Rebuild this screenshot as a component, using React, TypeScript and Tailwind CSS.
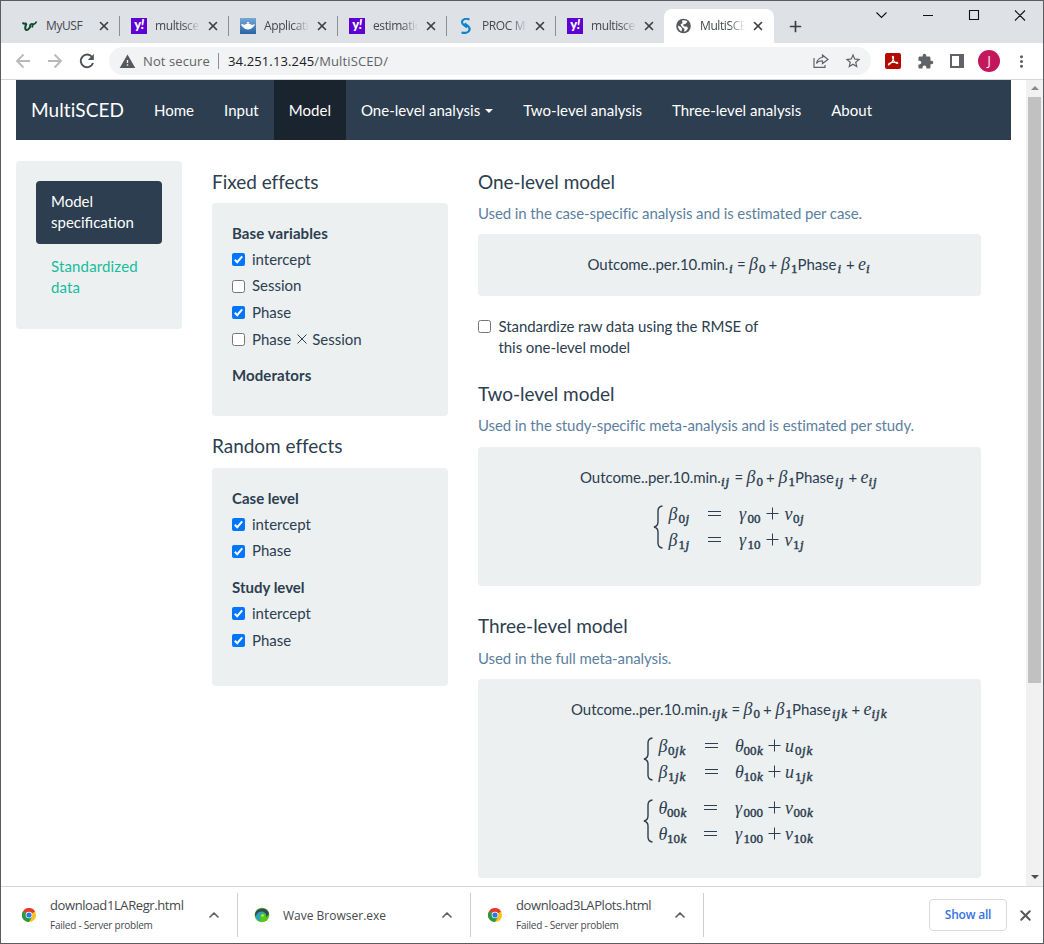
import React from "react";
import { ChevronUp, Plus, X } from "lucide-react";
import { MdExtension, MdMoreVert, MdPublic, MdStarBorder, MdWarning } from "react-icons/md";

const ui = "font-['Open_Sans','Noto_Sans',sans-serif]";

function Yahoo() {
  return (
    <div className="flex h-4 w-4 items-center justify-center bg-[#5f01d1] font-['Lato',sans-serif] text-[13px] leading-none font-black text-white">
      <span className="-mt-[3px] tracking-[-0.5px]">y<i>!</i></span>
    </div>
  );
}

function Bull() {
  return (
    <svg width="16" height="16" viewBox="0 0 16 16" fill="none" stroke="#12482f">
      <path d="M.5 4.500Q2 6.500 4.500 5.200" strokeWidth="2" />
      <path d="M4.500 5.500Q3 8.500 3.200 10.500 4 13 6 11.500 8.500 9.500 8.500 6.500" strokeWidth="2" />
      <path d="M8 7Q10 5 11 6.500 13.500 6 14.500 3.500M11 6.500L10 9.500" strokeWidth="1.800" />
    </svg>
  );
}

function Ship() {
  return (
    <svg width="16" height="16" viewBox="0 0 16 16">
      <defs>
        <linearGradient id="sea" x1="0" y1="0" x2="0" y2="1">
          <stop offset="0" stopColor="#76a9d6" />
          <stop offset="1" stopColor="#2863a5" />
        </linearGradient>
      </defs>
      <rect width="16" height="16" fill="url(#sea)" />
      <path d="M1 6.500 Q2.500 5.500 4 7 L6 6 Q8 4.500 10 6 L12 7 L15 6 Q14.500 8 12.500 9.500 Q11 11.500 8 11.500 Q4.500 11.500 3.500 9.500 Q2 8.500 1 6.500Z" fill="#fff" />
      <path d="M7 4.500h2" stroke="#fff" />
    </svg>
  );
}

function Sas() {
  return (
    <svg width="16" height="16" viewBox="0 0 16 16" fill="none" stroke="#0a84cc">
      <path d="M11.500 1.500 Q7 -.3 4.500 2.500 Q3 5 6 7.200 L9 9.500" strokeWidth="2" />
      <path d="M6.500 5.500 L10 8 Q13 11 10.500 13.500 Q8 15.800 3.500 14.500" strokeWidth="2.200" />
    </svg>
  );
}

const tabs = [
  { title: "MyUSF", icon: <Bull />, fade: false },
  { title: "multisce", icon: <Yahoo />, fade: true },
  { title: "Applicati", icon: <Ship />, fade: true },
  { title: "estimatic", icon: <Yahoo />, fade: true },
  { title: "PROC M", icon: <Sas />, fade: true },
  { title: "multisce", icon: <Yahoo />, fade: true },
];

function Tab({ title, icon, fade, active }: { title: string; icon: React.ReactNode; fade: boolean; active?: boolean }) {
  return (
    <div className={active ? "flex h-[34px] w-[110px] items-center rounded-t-lg bg-white pl-3" : "flex h-[34px] w-[109px] items-center pl-[11px]"}>
      <div className="w-4 shrink-0">{icon}</div>
      <div className={`ml-[7px] w-[46px] shrink-0 pl-px text-[12px] leading-4 tracking-[-0.4px] whitespace-nowrap text-[#45494d] ${fade ? "[mask-image:linear-gradient(to_right,#000_65%,transparent_100%)]" : ""}`}>{title}</div>
      <X className="ml-[6px] shrink-0 text-[#3c4043]" size={14} strokeWidth={2.800} />
      {!active && <div className="ml-auto h-5 w-px bg-[#8b8e93]" />}
    </div>
  );
}

function Browser() {
  return (
    <>
      <div className={`flex h-[42px] shrink-0 items-end bg-[#dee1e6] pl-[10px] ${ui}`}>
        {tabs.map((t, i) => <Tab key={i} {...t} />)}
        <div className="-ml-[1px]">
          <Tab
            title="MultiSCE"
            icon={
              <svg width="16" height="16" viewBox="0 0 16 16">
                <circle cx="7.500" cy="8" r="7.300" fill="#55595d" />
                <path d="M2 7.500Q5 8.500 6 10.500L5.500 13.500Q2 11.500 2 7.500zM6 2.500Q9 1.500 11.500 3.500L9.500 6 7 6.500 8 8.500 11 8.500 12 10.500Q10.500 13.500 8 13.800L8.500 11 6 9 4.500 6.500 6.500 5z" fill="#fff" />
              </svg>
            }
            fade
            active
          />
        </div>
        <div className="flex h-[34px] w-[43px] items-center justify-center text-[#3c4043]"><Plus size={17} strokeWidth={2.400} /></div>
        <div className="mt-[6px] ml-auto flex w-[171px] items-start self-start pr-[13px]">
          <svg width="158" height="18" viewBox="0 0 158 18" fill="none" stroke="#111" strokeWidth="1.100">
            <path d="M4.500 5.500l5 5 5-5M51 8.500h10M97.500 3.500h9v9h-9zM143 3.500l10 10M153 3.500l-10 10" />
          </svg>
        </div>
      </div>
      <div className={`flex h-[37px] shrink-0 items-center border-b border-[#d5d7da] bg-white ${ui}`}>
        <svg className="ml-[14px]" width="86" height="20" viewBox="0 0 86 20" fill="none" strokeWidth="1.800">
          <path d="M15 10H2M8.500 3.500L2 10l6.500 6.500M33 10h13M39.500 3.500L46 10l-6.500 6.500" stroke="#b7b9bc" />
          <path d="M77 6A6.300 6.300 0 1 0 78 12" stroke="#4f5357" strokeWidth="2" />
          <path d="M78.800 3v6h-6z" fill="#4f5357" />
        </svg>
        <div className="ml-[8px] flex h-[28px] w-[762px] items-center rounded-full bg-[#f1f3f4] pl-[10px] text-[13px] text-[#5f6368]">
          <MdWarning size={17} color="#55595d" />
          <span className="ml-[7px] w-[67px] pt-px tracking-[0.1px] whitespace-nowrap">Not secure</span>
          <span className="mx-[8px] h-4 w-px bg-[#8b8e93]" />
          <span className="ml-px pt-px tracking-[0.13px] whitespace-nowrap"><span className="text-[#202124]">34.251.13.245</span>/MultiSCED/</span>
          <svg className="mr-[15px] ml-auto" width="16" height="16" viewBox="0 0 16 16" fill="none" stroke="#5f6368" strokeWidth="1.200">
            <path d="M1 5v9.400h11V12M9.500 2l5.500 4.500-5.500 4V8Q5.500 7.500 3.500 10.500 4.500 5 9.500 4.500z" />
          </svg>
          <MdStarBorder className="mr-[9px]" size={18} />
        </div>
        <div className="ml-[14px] flex h-4 w-4 items-center justify-center rounded-[2px] bg-[#b30b00]">
          <svg width="12" height="12" viewBox="0 0 12 12" fill="none" stroke="#fff" strokeWidth="1.200"><path d="M5.500 1.500Q6.500 1 6.500 3 6 7 1.800 9.800 1 10.500 2 8.500 6 6.500 10 7.300 11.500 8.300 10 8.500 6 7 5.500 1.500z" /></svg>
        </div>
        <MdExtension className="ml-[16px]" size={17} color="#5f6368" />
        <div className="ml-[16px] h-[14px] w-[14px] border-2 border-r-[5px] border-[#5f6368]" />
        <div className="ml-[14px] flex h-[22px] w-[22px] items-center justify-center rounded-full bg-[#c2185b] text-[12px] text-white">J</div>
        <MdMoreVert className="ml-[12px]" size={19} color="#5f6368" />
      </div>
    </>
  );
}

function Check({ label, checked }: { label: React.ReactNode; checked?: boolean }) {
  return (
    <div className="flex h-[26.700px] items-center">
      <Box checked={checked} />
      <span className="ml-[7px]">{label}</span>
    </div>
  );
}

function Box({ checked }: { checked?: boolean }) {
  return checked ? (
    <svg className="shrink-0" width="13" height="13" viewBox="0 0 13 13">
      <rect width="13" height="13" rx="2" fill="#0075ff" />
      <path d="M2.800 6.800L5.200 9.200 10.200 3.300" fill="none" stroke="#fff" strokeWidth="2" />
    </svg>
  ) : (
    <div className="h-[13px] w-[13px] shrink-0 rounded-[2.500px] border border-[#767676] bg-white" />
  );
}

type Token = [kind: "t" | "v" | "s" | "o" | "gap", text: string, width: number];

function Tok({ token: [kind, text, width] }: { token: Token }) {
  if (kind === "gap") return <span className="shrink-0" style={{ width }} />;
  if (kind === "t") return <span className="shrink-0 tracking-[-0.06px] whitespace-nowrap" style={{ width }}>{text}</span>;
  if (kind === "v") return <span className="shrink-0 font-['Liberation_Serif',serif] text-[18px] leading-none italic" style={{ width }}>{text}</span>;
  if (kind === "o") {
    return (
      <svg className="mt-[2px] h-[13px] shrink-0 self-start" width={width} height="13" viewBox="0 0 13 13" stroke="#2c3e50" strokeWidth="1">
        <path d={text === "=" ? "M0 4.500h13M0 8.500h13" : "M.5 6.500h12M6.500 .5v12"} />
      </svg>
    );
  }
  return (
    <span className="shrink-0 translate-y-[3px] font-['Liberation_Serif',serif] text-[13px] leading-none whitespace-nowrap [-webkit-text-stroke:0.45px_#2c3e50]" style={{ width }}>
      {text.split("").map((c, i) => <span key={i} className={/\d/.test(c) ? "" : "mr-[0.700px] ml-[0.400px] italic"}>{c}</span>)}
    </span>
  );
}

function Line({ tokens, className = "" }: { tokens: Token[]; className?: string }) {
  return <div className={`flex items-baseline ${className}`}>{tokens.map((t, i) => <Tok key={i} token={t} />)}</div>;
}

function System({ rows, className }: { rows: Token[][]; className: string }) {
  return (
    <div className={`flex h-[52px] ${className}`}>
      <svg className="mt-[4px] shrink-0" width="10" height="44" viewBox="0 0 10 44" fill="none" stroke="#2c3e50" strokeWidth="1.400">
        <path d="M9.500 1Q5 1.500 5 6v11Q5 21 1 22 5 23 5 27v11Q5 42.500 9.500 43" />
      </svg>
      <div className="ml-[5.500px]">
        {rows.map((r, i) => <Line key={i} tokens={r} className="h-[26px] pt-[4px]" />)}
      </div>
    </div>
  );
}

const one: Token[] = [["t", "Outcome..per.10.min.", 141], ["s", "i", 8.5], ["t", "=", 12], ["v", "β", 10], ["s", "0", 9.5], ["t", "+", 12.500], ["v", "β", 10], ["s", "1", 6.5], ["t", "Phase", 39.5], ["s", "i", 9], ["t", "+", 12], ["v", "e", 7.5], ["s", "i", 5]];
const two: Token[] = [["t", "Outcome..per.10.min.", 140.5], ["s", "ij", 14], ["t", "=", 12], ["v", "β", 10], ["s", "0", 9.5], ["t", "+", 12.500], ["v", "β", 10], ["s", "1", 6.5], ["t", "Phase", 39.5], ["s", "ij", 14], ["t", "+", 12], ["v", "e", 7.5], ["s", "ij", 11]];
const three: Token[] = [["t", "Outcome..per.10.min.", 140.5], ["s", "ijk", 20], ["t", "=", 12], ["v", "β", 10], ["s", "0", 9.5], ["t", "+", 12.500], ["v", "β", 10], ["s", "1", 6.5], ["t", "Phase", 39.5], ["s", "ijk", 20], ["t", "+", 12], ["v", "e", 7.5], ["s", "ijk", 17]];

const twoRow = (n: string): Token[] => [["v", "β", 10], ["s", n + "j", 29.5], ["o", "=", 13], ["gap", "", 18], ["v", "γ", 8.5], ["s", n + "0", 18], ["o", "+", 13], ["gap", "", 6], ["v", "v", 8.5], ["s", n + "j", 13]];
const threeRow = (n: string): Token[] => [["v", "β", 9.5], ["s", n + "jk", 37], ["o", "=", 13], ["gap", "", 17], ["v", "θ", 8.5], ["s", n + "0k", 24], ["o", "+", 13], ["gap", "", 4.5], ["v", "u", 10], ["s", n + "jk", 19]];
const studyRow = (n: string): Token[] => [["v", "θ", 8.5], ["s", n + "0k", 37], ["o", "=", 13], ["gap", "", 18], ["v", "γ", 8.5], ["s", n + "00", 24.5], ["o", "+", 13], ["gap", "", 4], ["v", "v", 8.5], ["s", n + "0k", 19]];

function Heading({ children }: { children: React.ReactNode }) {
  return <h4 className="h-[21px] text-[19px] leading-[19px] tracking-[-0.030px]">{children}</h4>;
}

function Content() {
  const nav = "flex h-[60px] items-center px-[15px] pt-[2px] tracking-[0.020px]";
  const note = "h-[21px] tracking-[-0.1px] text-[#5d7f9f]";
  return (
    <main className="flex min-h-0 grow overflow-hidden font-['Lato',sans-serif] text-[15px] leading-[21.430px] text-[#2c3e50]">
      <div className="ml-[15px] w-[995px] shrink-0">
        <nav className="flex h-[60px] items-center bg-[#2c3e50] text-white">
          <div className="w-[123px] pl-[15px] text-[19px] tracking-[0.1px]">MultiSCED</div>
          <a className={nav}>Home</a>
          <a className={nav}>Input</a>
          <a className={`${nav} bg-[#1a242f]`}>Model</a>
          <a className={nav}>One-level analysis<span className="ml-[5px] border-x-4 border-t-4 border-x-transparent border-t-white" /></a>
          <a className={nav}>Two-level analysis</a>
          <a className={nav}>Three-level analysis</a>
          <a className={nav}>About</a>
        </nav>
        <div className="mt-[21px] flex items-start">
          <aside className="h-[168px] w-[166px] rounded bg-[#ecf0f1] p-5">
            <div className="h-[63px] rounded bg-[#2c3e50] px-[15px] py-[10px] text-white">Model specification</div>
            <div className="mt-[2px] h-[63px] px-[15px] py-[10px] tracking-[0.150px] text-[#18bc9c]">Standardized data</div>
          </aside>
          <section className="mt-[11px] ml-[30px] w-[236px]">
            <Heading>Fixed effects</Heading>
            <div className="mt-[10px] h-[213px] rounded bg-[#ecf0f1] px-5 pt-5">
              <div className="h-[23px] leading-[21px] font-bold tracking-[0.100px]">Base variables</div>
              <Check label="intercept" checked />
              <Check label="Session" />
              <Check label="Phase" checked />
              <Check label={<span className="flex items-center">Phase<svg className="mx-[5.500px]" width="10" height="10" viewBox="0 0 10 10" stroke="#2c3e50"><path d="M.5.5l9 9M9.500.5l-9 9" /></svg>Session</span>} />
              <div className="mt-[12px] font-bold tracking-[0.100px]">Moderators</div>
            </div>
            <div className="mt-[20px]"><Heading>Random effects</Heading></div>
            <div className="mt-[11px] h-[218px] rounded bg-[#ecf0f1] px-5 pt-5">
              <div className="h-[23px] leading-[21px] font-bold">Case level</div>
              <Check label="intercept" checked />
              <Check label="Phase" checked />
              <div className="mt-[13px] h-[23px] leading-[21px] font-bold">Study level</div>
              <Check label="intercept" checked />
              <Check label="Phase" checked />
            </div>
          </section>
          <section className="mt-[11px] ml-[30px] w-[503px]">
            <Heading>One-level model</Heading>
            <p className={`mt-[10px] ${note}`}>Used in the case-specific analysis and is estimated per case.</p>
            <div className="mt-[10px] h-[62px] rounded bg-[#ecf0f1] pt-5 pl-[109.500px]"><Line tokens={one} /></div>
            <div className="mt-[20px] flex h-[43px]">
              <div className="mt-[4px]"><Box /></div>
              <div className="ml-[7.500px] w-[270px] tracking-[-0.070px]">Standardize raw data using the RMSE of this one-level model</div>
            </div>
            <div className="mt-[25px]"><Heading>Two-level model</Heading></div>
            <p className={`mt-[10px] ${note}`}>Used in the study-specific meta-analysis and is estimated per study.</p>
            <div className="mt-[11px] h-[139px] rounded bg-[#ecf0f1] pt-5">
              <Line tokens={two} className="h-[34px] pl-[102px]" />
              <System rows={[twoRow("0"), twoRow("1")]} className="pl-[175px]" />
            </div>
            <div className="mt-[30px]"><Heading>Three-level model</Heading></div>
            <p className={`mt-[11px] ${note}`}>Used in the full meta-analysis.</p>
            <div className="mt-[10px] h-[199px] rounded bg-[#ecf0f1] pt-5">
              <Line tokens={three} className="h-[34px] pl-[93px]" />
              <System rows={[threeRow("0"), threeRow("1")]} className="pl-[165px]" />
              <System rows={[studyRow("0"), studyRow("1")]} className="mt-[10px] pl-[165px]" />
            </div>
          </section>
        </div>
      </div>
      <div className="ml-auto flex w-[17px] flex-col items-center bg-[#f1f1f1]">
        <div className="mt-[6px] border-x-4 border-b-4 border-x-transparent border-b-[#8a8a8a]" />
        <div className="mt-[7px] h-[586px] w-[13px] bg-[#c1c1c1]" />
        <div className="mt-auto mb-[7px] border-x-4 border-t-4 border-x-transparent border-t-[#505050]" />
      </div>
    </main>
  );
}

function Chrome() {
  return (
    <svg width="14" height="14" viewBox="0 0 14 14">
      <circle cx="7" cy="7" r="7" fill="#fbc116" />
      <path d="M7 7L.9 3.500A7 7 0 0 1 13.100 3.500z" fill="#e33b2e" />
      <path d="M7 7L.9 3.500A7 7 0 0 0 7 14L10 8.800z" fill="#269847" />
      <circle cx="7" cy="7" r="3.300" fill="#fff" />
      <circle cx="7" cy="7" r="2.600" fill="#2878e8" />
    </svg>
  );
}

function Wave() {
  return (
    <svg width="16" height="16" viewBox="0 0 16 16">
      <circle cx="8" cy="8" r="7.300" fill="#58c91c" />
      <path d="M.8 8A7.300 7.300 0 0 1 15 6.500Q14.500 9 12 10 13 7 10.500 6 6 5 5 10 2 11 .8 8z" fill="#344d52" />
      <path d="M1.500 10.500Q2.500 5 7.500 4.500 11.500 4.500 11.500 8 9.500 5.500 7 7.500 5 10 7 14 3 13.500 1.500 10.500z" fill="#2aa3c0" />
      <path d="M7 8.500Q9 6.500 10 8 10 10 8 9.800z" fill="#c9ec3c" />
    </svg>
  );
}

function Download({ icon, name, sub }: { icon: React.ReactNode; name: string; sub?: string }) {
  return (
    <div className="flex h-[44px] w-[233px] items-center border-r border-[#cdced0]">
      <div className="ml-[15px] flex w-[17px] justify-center">{icon}</div>
      <div className="ml-[13px] grow whitespace-nowrap">
        <div className={sub ? "-mt-[2px] text-[13px] leading-[18px] tracking-[-0.4px] text-[#45494d]" : "mt-[2px] text-[12px] leading-[18px] text-[#45494d]"}>{name}</div>
        {sub && <div className="mt-[4px] text-[10px] leading-[14px] tracking-[-0.24px] text-[#45494d]">{sub}</div>}
      </div>
      <ChevronUp className="mr-[15px] text-[#5f6368]" size={16} strokeWidth={2.600} />
    </div>
  );
}

export default function App() {
  return (
    <div className="flex h-[944px] w-[1044px] flex-col overflow-hidden border border-[#5c5c5f] bg-white">
      <Browser />
      <Content />
      <footer className={`flex h-[57px] shrink-0 items-center border-t border-[#d5d7da] bg-white pl-[4px] ${ui}`}>
        <Download icon={<Chrome />} name="download1LARegr.html" sub="Failed - Server problem" />
        <Download icon={<Wave />} name="Wave Browser.exe" />
        <Download icon={<Chrome />} name="download3LAPlots.html" sub="Failed - Server problem" />
        <div className="mr-[10px] ml-auto flex h-8 w-[78px] items-center justify-center rounded border border-[#d8dadd] text-[12px] font-semibold tracking-[-0.2px] text-[#3871e0]">Show all</div>
        <X className="mr-[9px] text-[#55595d]" size={17} strokeWidth={2.800} />
      </footer>
    </div>
  );
}
